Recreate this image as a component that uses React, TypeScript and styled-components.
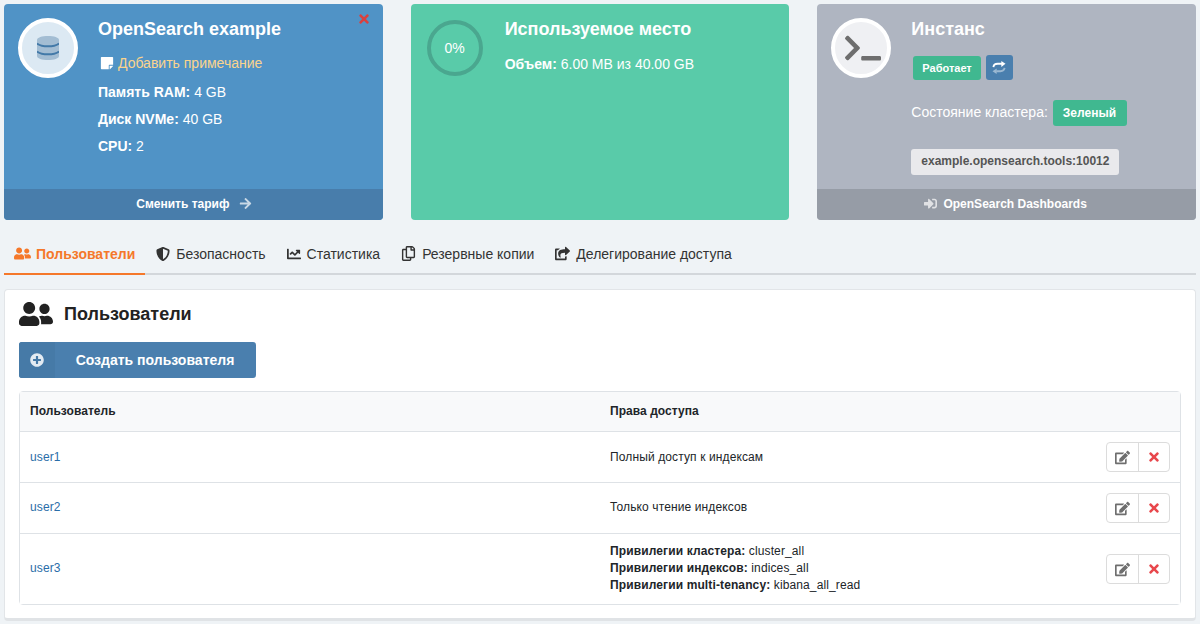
import React from 'react'
import styled, { createGlobalStyle } from 'styled-components'
import {
  FaArrowRight,
  FaChartLine,
  FaEdit,
  FaPlusCircle,
  FaRegCopy,
  FaShareSquare,
  FaShieldAlt,
  FaSignInAlt,
  FaStickyNote,
  FaTerminal,
  FaTimes,
  FaUserFriends
} from 'react-icons/fa'

const GlobalStyle = createGlobalStyle`
  html, body {
    margin: 0;
    padding: 0;
    background: #eff3f6;
    font-family: "Liberation Sans", Arial, sans-serif;
    font-size: 14px;
    color: #212529;
  }
  * { box-sizing: border-box; }
`

const Page = styled.div`
  padding: 4px 4px 0;
  height: 624px;
  overflow: hidden;
`

const Cards = styled.div`
  display: grid;
  grid-template-columns: repeat(3, 1fr);
  gap: 28px;
`

const Card = styled.div<{ $bg: string }>`
  position: relative;
  height: 216px;
  border-radius: 4px;
  overflow: hidden;
  color: #fff;
  background: ${({ $bg }) => $bg};
  display: flex;
  flex-direction: column;
`

const CardBody = styled.div`
  flex: 1;
  display: flex;
  padding: 14px 14px 0;
`

const Avatar = styled.div<{ $bg: string; $color: string; $nudge?: number }>`
  width: 60px;
  height: 60px;
  flex: none;
  padding-left: ${({ $nudge }) => $nudge || 0}px;
  border-radius: 50%;
  border: 4px solid #fff;
  background: ${({ $bg }) => $bg};
  color: ${({ $color }) => $color};
  display: flex;
  align-items: center;
  justify-content: center;
`

const Gauge = styled.div`
  width: 56px;
  height: 56px;
  margin: 2px 0 0 2px;
  flex: none;
  border-radius: 50%;
  border: 4px solid #4aa78f;
  display: flex;
  align-items: center;
  justify-content: center;
`

const Info = styled.div<{ $offset: number }>`
  margin-left: ${({ $offset }) => $offset}px;
  min-width: 0;
`

const Title = styled.div`
  font-size: 18px;
  font-weight: 700;
  line-height: 22px;
`

const NoteLink = styled.div`
  display: flex;
  align-items: center;
  gap: 4px;
  margin: 13px 0 9px;
  padding-left: 2px;
  height: 20px;
  color: #fbd38d;
  svg {
    color: #fff;
  }
`

const Spec = styled.div`
  line-height: 20px;
  margin-top: 7px;
`

const Volume = styled.div`
  line-height: 20px;
  margin-top: 14px;
`

const CloseMark = styled.div`
  position: absolute;
  top: 8px;
  right: 12px;
  color: #d9413f;
  display: flex;
`

const CardFooter = styled.div<{ $bg: string; $gap: number; $pad: string }>`
  height: 31px;
  padding: ${({ $pad }) => $pad};
  background: ${({ $bg }) => $bg};
  display: flex;
  align-items: center;
  justify-content: center;
  gap: ${({ $gap }) => $gap}px;
  font-size: 12px;
  font-weight: 700;
  svg {
    color: rgba(255, 255, 255, 0.7);
  }
`

const StatusRow = styled.div`
  display: flex;
  align-items: center;
  gap: 5px;
  margin: 15px 0 0 2px;
`

const Badge = styled.span<{ $size: number; $height: number; $pad: string }>`
  display: inline-flex;
  align-items: center;
  height: ${({ $height }) => $height}px;
  padding: ${({ $pad }) => $pad};
  background: #40b890;
  color: #fff;
  font-size: ${({ $size }) => $size}px;
  font-weight: 700;
  border-radius: 3px;
`

const RefreshButton = styled.div`
  width: 27px;
  height: 25px;
  border-radius: 3px;
  background: #4a7fae;
  display: flex;
  align-items: center;
  justify-content: center;
`

const ClusterRow = styled.div`
  display: flex;
  align-items: center;
  gap: 5px;
  margin-top: 20px;
`

const ClusterLabel = styled.span`
  padding-bottom: 2px;
`

const Endpoint = styled.div`
  display: inline-block;
  margin-top: 23px;
  height: 26px;
  line-height: 25px;
  padding: 0 10px;
  background: #e9e9ec;
  color: #555;
  font-size: 12px;
  font-weight: 700;
  border-radius: 3px;
`

const Tabs = styled.nav`
  display: flex;
  margin: 10px 0 14px;
  height: 45px;
  border-bottom: 2px solid #d3d7db;
`

const Tab = styled.div<{ $active?: boolean; $gap: number }>`
  display: flex;
  align-items: center;
  height: 45px;
  padding: 4px 10px 0 ${({ $active }) => ($active ? 10 : 11)}px;
  gap: ${({ $gap }) => $gap}px;
  color: ${({ $active }) => ($active ? '#f5782a' : '#333')};
  font-weight: ${({ $active }) => ($active ? 700 : 400)};
  border-bottom: 2px solid ${({ $active }) => ($active ? '#f5782a' : 'transparent')};
`

const Panel = styled.section`
  height: 332px;
  background: #fff;
  border: 1px solid #e2e5e8;
  border-bottom: 3px solid #e0e3e6;
  border-radius: 4px;
  padding: 8px 14px 0;
`

const PanelHeading = styled.h2`
  display: flex;
  align-items: center;
  gap: 11px;
  margin: 0;
  height: 32px;
  font-size: 18px;
  font-weight: 700;
  color: #222;
`

const CreateButton = styled.div`
  display: flex;
  width: 237px;
  height: 36px;
  margin-top: 12px;
  border-radius: 3px;
  overflow: hidden;
  background: #4a7fae;
  color: #fff;
  font-weight: 700;
`

const CreateIcon = styled.div`
  width: 36px;
  background: #467aa7;
  display: flex;
  align-items: center;
  justify-content: center;
  color: rgba(255, 255, 255, 0.85);
`

const CreateLabel = styled.div`
  flex: 1;
  display: flex;
  align-items: center;
  justify-content: center;
  padding-right: 1px;
`

const Table = styled.div`
  margin-top: 13px;
  border: 1px solid #dee2e6;
  border-radius: 4px;
  font-size: 12px;
  color: #212529;
`

const Row = styled.div<{ $height: number; $head?: boolean }>`
  display: grid;
  grid-template-columns: 580px 1fr auto;
  align-items: center;
  height: ${({ $height }) => $height}px;
  padding: 0 10px;
  background: ${({ $head }) => ($head ? '#f8f9fa' : '#fff')};
  font-weight: ${({ $head }) => ($head ? 700 : 400)};
  letter-spacing: ${({ $head }) => ($head ? 0.05 : 0.12)}px;
  & + & {
    border-top: 1px solid #dee2e6;
  }
`

const Cell = styled.div<{ $lift: number }>`
  padding-bottom: ${({ $lift }) => $lift}px;
`

const UserLink = styled(Cell)`
  color: #2a6da8;
`

const Privileges = styled(Cell)`
  line-height: 17px;
`

const Actions = styled.div`
  display: flex;
  height: 30px;
  border: 1px solid #dcdcdc;
  border-radius: 4px;
  background: #fff;
`

const ActionButton = styled.div<{ $color: string }>`
  width: 31px;
  display: flex;
  align-items: center;
  justify-content: center;
  color: ${({ $color }) => $color};
  & + & {
    border-left: 1px solid #dcdcdc;
  }
`

const DatabaseIcon = () => (
  <svg width="22" height="24" viewBox="0 0 22 24">
    <path
      d="M0 4C0 1.5 5 0 11 0s11 1.5 11 4v16c0 2.5-5 4-11 4S0 22.500 0 20z"
      fill="#a3bdd3"
    />
    <path
      d="M0 7.500c2.500 2 6.500 2.800 11 2.800s8.500-.8 11-2.800M0 15.500c2.500 2 6.500 2.800 11 2.800s8.500-.8 11-2.800"
      fill="none"
      stroke="#4279a8"
      strokeWidth="2"
    />
  </svg>
)

const RefreshIcon = () => (
  <svg width="14" height="13" viewBox="0 0 15 14">
    <path
      d="M1.500 6.500C1.800 4 3.500 3 6 3h5"
      fill="none"
      stroke="#fff"
      strokeWidth="2"
    />
    <path d="M10 0l4.500 3L10 6.500z" fill="#fff" />
    <path
      d="M13.500 7.500C13.200 10 11.500 11 9 11H5"
      fill="none"
      stroke="rgba(255,255,255,0.45)"
      strokeWidth="2"
    />
    <path d="M5 8L0.500 11 5 14z" fill="rgba(255,255,255,0.45)" />
  </svg>
)

const users = [
  { name: 'user1', height: 51, lift: 0, access: 'Полный доступ к индексам' },
  { name: 'user2', height: 51, lift: 2, access: 'Только чтение индексов' },
  { name: 'user3', height: 71, lift: 2, access: null }
]

export default function App() {
  return (
    <>
      <GlobalStyle />
      <Page>
        <Cards>
          <Card $bg="#5093c6">
            <CloseMark>
              <FaTimes size={14} />
            </CloseMark>
            <CardBody>
              <Avatar $bg="#dce9f3" $color="#a3bdd3">
                <DatabaseIcon />
              </Avatar>
              <Info $offset={20}>
                <Title>OpenSearch example</Title>
                <NoteLink>
                  <FaStickyNote size={14} />
                  Добавить примечание
                </NoteLink>
                <Spec>
                  <b>Память RAM:</b> 4 GB
                </Spec>
                <Spec>
                  <b>Диск NVMe:</b> 40 GB
                </Spec>
                <Spec>
                  <b>CPU:</b> 2
                </Spec>
              </Info>
            </CardBody>
            <CardFooter $bg="#487dab" $gap={10} $pad="0 0 2px 2px">
              Сменить тариф
              <FaArrowRight size={13} />
            </CardFooter>
          </Card>

          <Card $bg="#59cba9">
            <CardBody>
              <Gauge>0%</Gauge>
              <Info $offset={22}>
                <Title>Используемое место</Title>
                <Volume>
                  <b>Объем:</b> 6.00 MB из 40.00 GB
                </Volume>
              </Info>
            </CardBody>
          </Card>

          <Card $bg="#afb5c1">
            <CardBody>
              <Avatar $bg="#eff0f3" $color="#6e6e6e" $nudge={3}>
                <FaTerminal size={36} />
              </Avatar>
              <Info $offset={20}>
                <Title>Инстанс</Title>
                <StatusRow>
                  <Badge $size={11} $height={24} $pad="0 9px">
                    Работает
                  </Badge>
                  <RefreshButton>
                    <RefreshIcon />
                  </RefreshButton>
                </StatusRow>
                <ClusterRow>
                  <ClusterLabel>Состояние кластера:</ClusterLabel>
                  <Badge $size={12} $height={26} $pad="0 11px 0 10px">
                    Зеленый
                  </Badge>
                </ClusterRow>
                <Endpoint>example.opensearch.tools:10012</Endpoint>
              </Info>
            </CardBody>
            <CardFooter $bg="#969ca6" $gap={6} $pad="0 2px 2px 0">
              <FaSignInAlt size={13} />
              OpenSearch Dashboards
            </CardFooter>
          </Card>
        </Cards>

        <Tabs>
          <Tab $active $gap={5}>
            <FaUserFriends size={17} />
            Пользователи
          </Tab>
          <Tab $gap={6}>
            <FaShieldAlt size={14} />
            Безопасность
          </Tab>
          <Tab $gap={6}>
            <FaChartLine size={14} />
            Статистика
          </Tab>
          <Tab $gap={6}>
            <FaRegCopy size={15} />
            Резервные копии
          </Tab>
          <Tab $gap={6}>
            <FaShareSquare size={15} />
            Делегирование доступа
          </Tab>
        </Tabs>

        <Panel>
          <PanelHeading>
            <FaUserFriends size={34} color="#222" />
            Пользователи
          </PanelHeading>
          <CreateButton>
            <CreateIcon>
              <FaPlusCircle size={14} />
            </CreateIcon>
            <CreateLabel>Создать пользователя</CreateLabel>
          </CreateButton>
          <Table>
            <Row $height={39} $head>
              <Cell $lift={2}>Пользователь</Cell>
              <Cell $lift={2}>Права доступа</Cell>
            </Row>
            {users.map(user => (
              <Row key={user.name} $height={user.height}>
                <UserLink $lift={user.lift}>{user.name}</UserLink>
                {user.access ? (
                  <Cell $lift={user.lift}>{user.access}</Cell>
                ) : (
                  <Privileges $lift={user.lift}>
                    <div>
                      <b>Привилегии кластера:</b> cluster_all
                    </div>
                    <div>
                      <b>Привилегии индексов:</b> indices_all
                    </div>
                    <div>
                      <b>Привилегии multi-tenancy:</b> kibana_all_read
                    </div>
                  </Privileges>
                )}
                <Actions>
                  <ActionButton $color="#6e6e6e">
                    <FaEdit size={15} />
                  </ActionButton>
                  <ActionButton $color="#e8474c">
                    <FaTimes size={14} />
                  </ActionButton>
                </Actions>
              </Row>
            ))}
          </Table>
        </Panel>
      </Page>
    </>
  )
}
